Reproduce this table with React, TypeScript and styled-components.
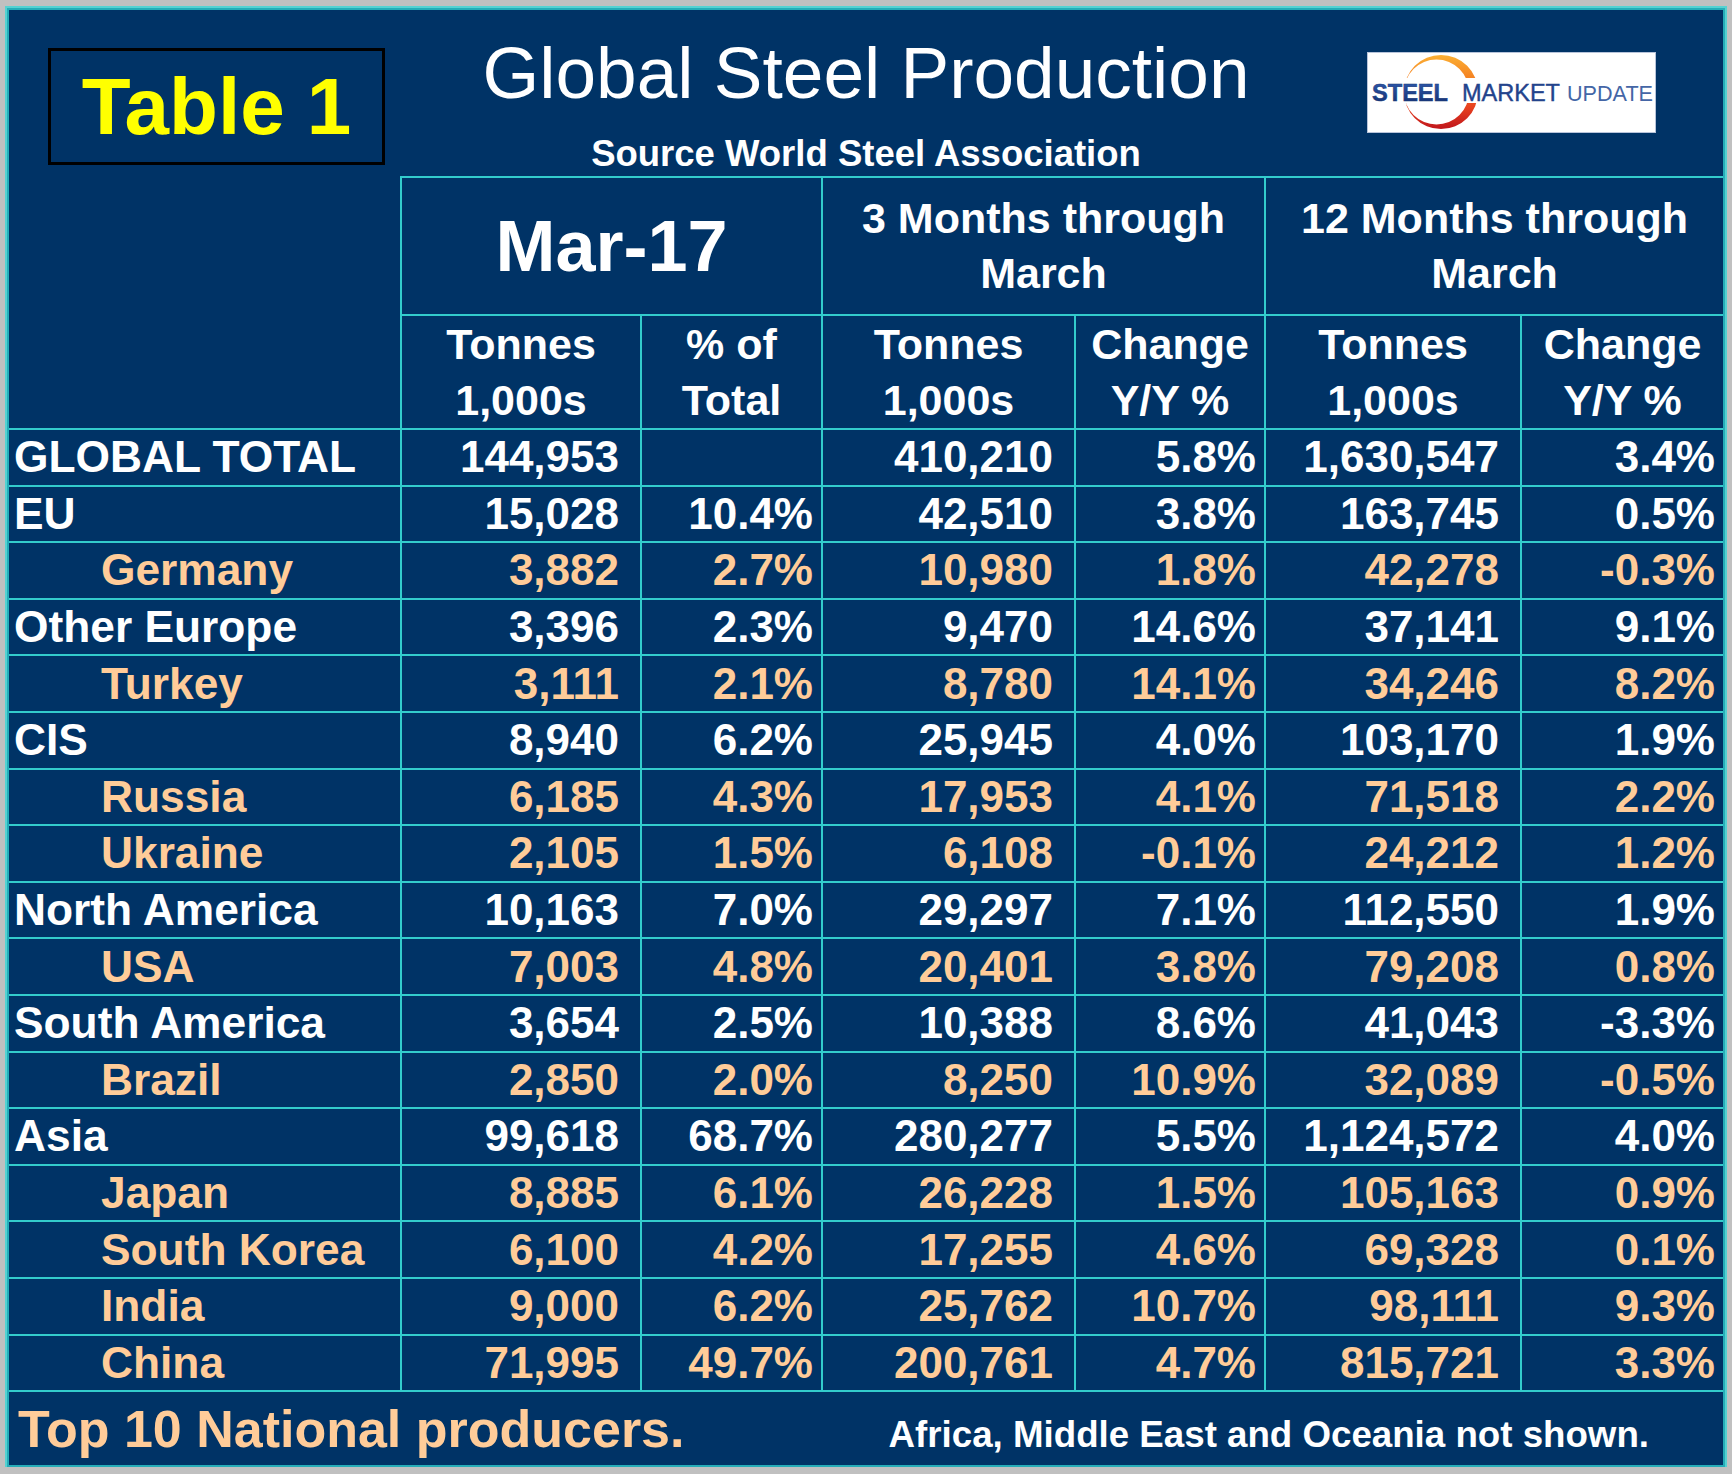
import React from "react";
import styled, { createGlobalStyle } from "styled-components";

const NAVY = "#003366";
const LINE = "#33cccc";
const PEACH = "#ffcc99";

type Row = {
  name: string;
  sub?: boolean;
  values: [string, string, string, string, string, string];
};

// regions in white, the top national producers in peach
const rows: Row[] = [
  { name: "GLOBAL TOTAL", values: ["144,953", "", "410,210", "5.8%", "1,630,547", "3.4%"] },
  { name: "EU", values: ["15,028", "10.4%", "42,510", "3.8%", "163,745", "0.5%"] },
  { name: "Germany", sub: true, values: ["3,882", "2.7%", "10,980", "1.8%", "42,278", "-0.3%"] },
  { name: "Other Europe", values: ["3,396", "2.3%", "9,470", "14.6%", "37,141", "9.1%"] },
  { name: "Turkey", sub: true, values: ["3,111", "2.1%", "8,780", "14.1%", "34,246", "8.2%"] },
  { name: "CIS", values: ["8,940", "6.2%", "25,945", "4.0%", "103,170", "1.9%"] },
  { name: "Russia", sub: true, values: ["6,185", "4.3%", "17,953", "4.1%", "71,518", "2.2%"] },
  { name: "Ukraine", sub: true, values: ["2,105", "1.5%", "6,108", "-0.1%", "24,212", "1.2%"] },
  { name: "North America", values: ["10,163", "7.0%", "29,297", "7.1%", "112,550", "1.9%"] },
  { name: "USA", sub: true, values: ["7,003", "4.8%", "20,401", "3.8%", "79,208", "0.8%"] },
  { name: "South America", values: ["3,654", "2.5%", "10,388", "8.6%", "41,043", "-3.3%"] },
  { name: "Brazil", sub: true, values: ["2,850", "2.0%", "8,250", "10.9%", "32,089", "-0.5%"] },
  { name: "Asia", values: ["99,618", "68.7%", "280,277", "5.5%", "1,124,572", "4.0%"] },
  { name: "Japan", sub: true, values: ["8,885", "6.1%", "26,228", "1.5%", "105,163", "0.9%"] },
  { name: "South Korea", sub: true, values: ["6,100", "4.2%", "17,255", "4.6%", "69,328", "0.1%"] },
  { name: "India", sub: true, values: ["9,000", "6.2%", "25,762", "10.7%", "98,111", "9.3%"] },
  { name: "China", sub: true, values: ["71,995", "49.7%", "200,761", "4.7%", "815,721", "3.3%"] },
];

const GlobalStyle = createGlobalStyle`
  html, body {
    margin: 0;
    padding: 0;
    background: #c0c0c0;
  }
  body {
    font-family: "Liberation Sans", Arial, sans-serif;
  }
`;

const Frame = styled.div`
  box-sizing: border-box;
  width: 1718px;
  margin: 8px 0 0 7px;
  background: ${NAVY};
  border: 2px solid #26adb8;
  outline: 2px solid #55d2d2;
  color: #ffffff;
`;

const Masthead = styled.header`
  display: grid;
  grid-template-columns: 1fr auto 1fr;
  align-items: start;
  height: 166px;
`;

const Badge = styled.div`
  justify-self: start;
  box-sizing: border-box;
  margin: 38px 0 0 39px;
  width: 337px;
  height: 117px;
  border: 3px solid #000000;
  display: flex;
  align-items: center;
  justify-content: center;
  color: #ffff00;
  font-size: 80px;
  font-weight: 700;
  line-height: 1;
`;

const TitleBlock = styled.div`
  text-align: center;
`;

const Title = styled.h1`
  margin: 26px 0 0;
  font-size: 73px;
  font-weight: 400;
  line-height: 73px;
`;

const Source = styled.div`
  margin-top: 27px;
  font-size: 36.5px;
  font-weight: 700;
  line-height: 36px;
`;

const Logo = styled.div`
  justify-self: end;
  box-sizing: border-box;
  margin: 42px 67px 0 0;
  width: 289px;
  height: 81px;
  background: #ffffff;
  border: 1px solid #b8c4da;

  svg {
    display: block;
  }
`;

const Sheet = styled.div`
  display: grid;
  grid-template-columns: 391px 240px 181px 253px 190px 256px 203px;
  grid-template-rows: 138px 114px repeat(17, 56.6px);
  font-weight: 700;
`;

const Corner = styled.div`
  grid-row: 1 / span 2;
`;

const PeriodHead = styled.div<{ $big?: boolean }>`
  grid-column: span 2;
  box-sizing: border-box;
  border-top: 2px solid ${LINE};
  border-left: 2px solid ${LINE};
  display: flex;
  align-items: center;
  justify-content: center;
  text-align: center;
  font-size: ${(p) => (p.$big ? 72 : 43)}px;
  line-height: ${(p) => (p.$big ? "1" : "55px")};
`;

const ColumnHead = styled.div`
  box-sizing: border-box;
  border-top: 2px solid ${LINE};
  border-left: 2px solid ${LINE};
  display: flex;
  align-items: center;
  justify-content: center;
  text-align: center;
  font-size: 43px;
  line-height: 56px;
`;

const Label = styled.div<{ $sub?: boolean }>`
  box-sizing: border-box;
  border-top: 2px solid ${LINE};
  display: flex;
  align-items: center;
  padding-left: ${(p) => (p.$sub ? 92 : 5)}px;
  color: ${(p) => (p.$sub ? PEACH : "#ffffff")};
  font-size: 44.3px;
  white-space: nowrap;
`;

const Value = styled.div<{ $sub?: boolean; $pct?: boolean }>`
  box-sizing: border-box;
  border-top: 2px solid ${LINE};
  border-left: 2px solid ${LINE};
  display: flex;
  align-items: center;
  justify-content: flex-end;
  padding-right: ${(p) => (p.$pct ? 8 : 21)}px;
  color: ${(p) => (p.$sub ? PEACH : "#ffffff")};
  font-size: 44px;
  white-space: nowrap;
`;

const Footer = styled.footer`
  box-sizing: border-box;
  height: 75px;
  border-top: 2px solid ${LINE};
  display: flex;
  align-items: baseline;
  justify-content: space-between;
  padding: 11px 74px 0 9px;
  font-weight: 700;
`;

const Note = styled.span<{ $lead?: boolean }>`
  font-size: ${(p) => (p.$lead ? 52 : 36.7)}px;
  line-height: 1;
  color: ${(p) => (p.$lead ? PEACH : "#ffffff")};
`;

const SmuLogo = () => (
  <svg width="287" height="79" viewBox="1 1 287 79">
    <defs>
      <linearGradient id="arc" x1="0" y1="0" x2="0" y2="1">
        <stop offset="0" stopColor="#fbb034" />
        <stop offset="0.35" stopColor="#f47c20" />
        <stop offset="0.7" stopColor="#e8421f" />
        <stop offset="1" stopColor="#c0161c" />
      </linearGradient>
      <linearGradient id="ink" x1="0" y1="0" x2="0" y2="1">
        <stop offset="0" stopColor="#2f5bb0" />
        <stop offset="1" stopColor="#132e6e" />
      </linearGradient>
    </defs>
    <path
      fillRule="evenodd"
      fill="url(#arc)"
      d="M74 3 A37 37 0 1 1 74 77 A37 37 0 1 1 74 3 Z M69.5 7.5 A32.5 32.5 0 1 0 69.5 72.5 A32.5 32.5 0 1 0 69.5 7.5 Z"
    />
    <rect x="30" y="26" width="100" height="25" fill="#ffffff" />
    <text
      x="5"
      y="49"
      fontFamily="Liberation Sans, Arial, sans-serif"
      fontSize="23.5"
      fontWeight="700"
      fill="url(#ink)"
      stroke="#1a3878"
      strokeWidth="0.5"
      textLength="76"
      lengthAdjust="spacingAndGlyphs"
    >
      STEEL
    </text>
    <text
      x="95"
      y="49"
      fontFamily="Liberation Sans, Arial, sans-serif"
      fontSize="23.5"
      fill="#23438c"
      stroke="#23438c"
      strokeWidth="0.4"
      textLength="98"
      lengthAdjust="spacingAndGlyphs"
    >
      MARKET
    </text>
    <text
      x="200"
      y="49"
      fontFamily="Liberation Sans, Arial, sans-serif"
      fontSize="22"
      fill="#4466a6"
      textLength="86"
      lengthAdjust="spacingAndGlyphs"
    >
      UPDATE
    </text>
  </svg>
);

const App = () => {
  return (
    <>
      <GlobalStyle />
      <Frame>
        <Masthead>
          <Badge>Table 1</Badge>
          <TitleBlock>
            <Title>Global Steel Production</Title>
            <Source>Source World Steel Association</Source>
          </TitleBlock>
          <Logo>
            <SmuLogo />
          </Logo>
        </Masthead>

        <Sheet>
          <Corner />
          <PeriodHead $big>Mar-17</PeriodHead>
          <PeriodHead>
            3 Months through
            <br />
            March
          </PeriodHead>
          <PeriodHead>
            12 Months through
            <br />
            March
          </PeriodHead>

          <ColumnHead>
            Tonnes
            <br />
            1,000s
          </ColumnHead>
          <ColumnHead>
            % of
            <br />
            Total
          </ColumnHead>
          <ColumnHead>
            Tonnes
            <br />
            1,000s
          </ColumnHead>
          <ColumnHead>
            Change
            <br />
            Y/Y %
          </ColumnHead>
          <ColumnHead>
            Tonnes
            <br />
            1,000s
          </ColumnHead>
          <ColumnHead>
            Change
            <br />
            Y/Y %
          </ColumnHead>

          {rows.map((row) => (
            <React.Fragment key={row.name}>
              <Label $sub={row.sub}>{row.name}</Label>
              {row.values.map((v, i) => (
                <Value key={i} $sub={row.sub} $pct={i % 2 === 1}>
                  {v}
                </Value>
              ))}
            </React.Fragment>
          ))}
        </Sheet>

        <Footer>
          <Note $lead>Top 10 National producers.</Note>
          <Note>Africa, Middle East and Oceania not shown.</Note>
        </Footer>
      </Frame>
    </>
  );
};

export default App;
